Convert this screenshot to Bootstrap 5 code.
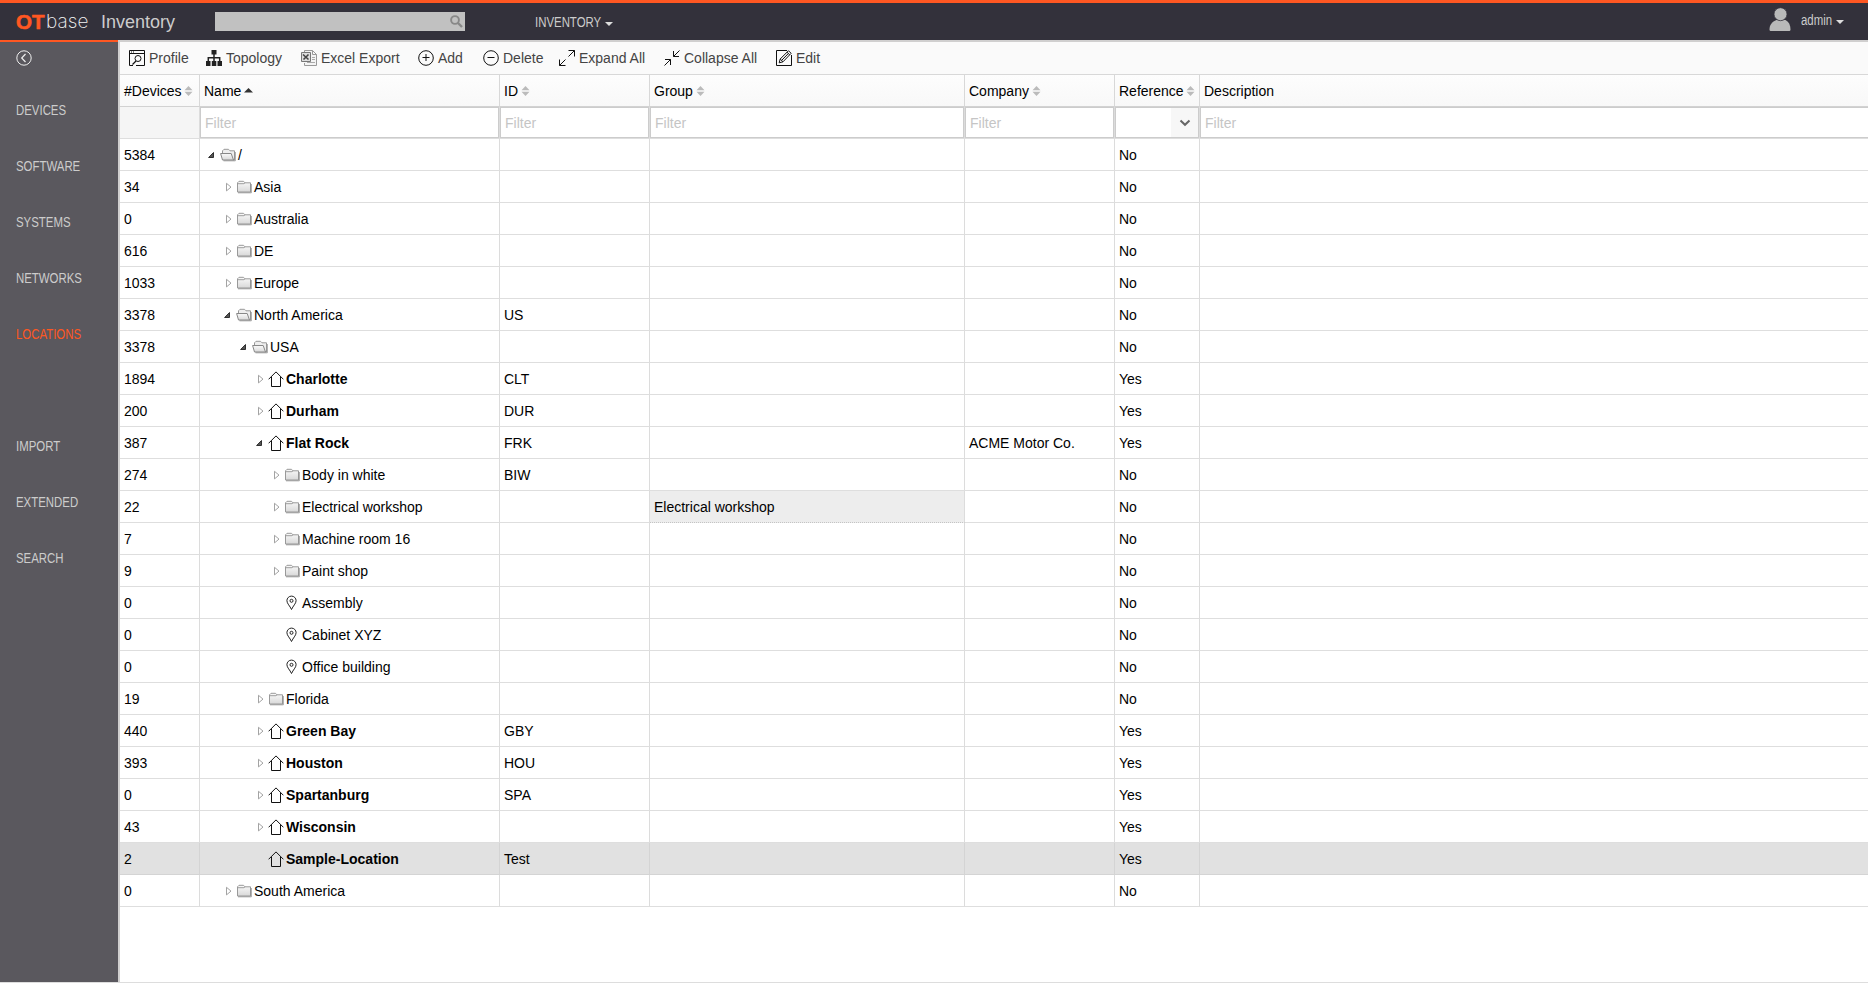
<!DOCTYPE html>
<html lang="en">
<head>
<meta charset="utf-8">
<title>OTbase Inventory</title>
<link rel="stylesheet" href="https://cdn.jsdelivr.net/npm/bootstrap@5.3.0/dist/css/bootstrap.min.css">
<style>
body{font-family:"Liberation Sans",Arial,sans-serif;font-size:14px;line-height:20px;color:#000;background:#fff}
.narrow span{display:inline-block;transform:scaleX(.815);transform-origin:left center}
.topbar{height:42px;background:#33313b;border-top:3px solid #ff5722;border-bottom:2px solid #d0cfcf}
.brandbox{width:215px;padding-left:16px;height:37px}
.brandbox .ot{font-weight:700;font-size:20.5px;color:#ff5722;width:30px;-webkit-text-stroke:.6px #ff5722}
.brandbox .base{font-family:Inter,sans-serif;font-weight:200;font-size:19px;color:#f4f4f4;width:55px;letter-spacing:.1px}
.brandbox .app{font-size:18px;color:#ccc}
.searchbox{width:250px;height:19px;background:#c1c1c1;margin-top:9px;padding-right:2px}
.menutxt{color:#ccc;font-size:14px}
.tri{border:4px solid transparent;border-top-color:#ddd;border-bottom:0;width:0;height:0}
.side{width:120px;background:#5a585e;border-right:2px solid #d0cfcf}
.side .accent{height:2px;margin-top:-2px;width:118px;background:#ff5722}
.side a{height:56px;padding-left:16px;color:#ccc;text-decoration:none}
.side a.active{color:#ff5722}
.side .upper{margin-bottom:56px}
.tools{height:33px;background:#fafafa;border-bottom:1px solid #d8d8d8;padding-left:9px;color:#444;grid-template-columns:77px 95px 117px 65px 76px 105px 112px 80px}
.tools .item{gap:4px;white-space:nowrap}
.grid{table-layout:fixed;border-collapse:separate;border-spacing:0;width:1748px}
.grid th,.grid td{height:32px;padding:0 0 0 4px;border-right:1px solid #dcdcdc;border-bottom:1px solid #dedede;font-weight:400;vertical-align:middle;white-space:nowrap;line-height:20px}
.grid th:last-child,.grid td:last-child{border-right:0}
.grid thead tr:first-child th{background:linear-gradient(#fdfdfd,#f8f8f8);border-color:#d2d2d2 #d8d8d8}
.grid thead tr:first-child svg{margin-left:-1px}
.grid .sorter{margin-top:-2px}
.grid .filters th{padding:0;background:#f5f5f5}
.grid .filters .form-control{height:31px;border:1px solid #ccc;border-radius:0;padding:0 4px;font-size:14px;color:#000;box-shadow:none}
.grid .filters .form-control::placeholder{color:#c5c5c5}
.grid .filters th:last-child .form-control{border-right:0}
.pick{height:31px;border:1px solid #ccc;background:#fff}
.pick span{width:27px;background:#f7f7f7}
.grid tr.selected td{background:#e1e1e1;border-color:#d4d4d4}
.grid td.hl{background:#ededed;border-bottom:1px dotted #c4c4c4}
.tree{height:20px}
.tree svg{flex:none}
.tree .ar{width:16px;height:16px}
.page{height:941px;border-bottom:1px solid #ddd}
</style>
</head>
<body class="overflow-hidden">
<svg width="0" height="0" class="position-absolute">
<defs>
<linearGradient id="gf" x1="0" y1="0" x2="0" y2="1"><stop offset="0" stop-color="#fafafa"/><stop offset="1" stop-color="#d8d8d8"/></linearGradient>
<symbol id="folder" viewBox="0 0 16 16"><path d="M1.500 13V3.800L3 2.300h4.500L9 3.800h5.500V13z" fill="url(#gf)" stroke="#999"/><path d="M2 4.700h6l1-.9M15.300 5v8.800H2" fill="none" stroke="#888" stroke-width=".8"/></symbol>
<symbol id="open" viewBox="0 0 16 16"><path d="M2.500 7V3.800L4 2.300h4.500L10 3.800h4.500V13H13" fill="#eee" stroke="#999"/><path d="M.6 6.500h10.600L13.500 13h-11z" fill="url(#gf)" stroke="#888"/><path d="M15.300 5v8.800H3.500" fill="none" stroke="#888" stroke-width=".8"/></symbol>
<symbol id="house" viewBox="0 0 16 16"><path d="M.6 8.300 8 .9l7.400 7.400M3.500 6v9.500h9V6" fill="none" stroke="#111" stroke-width="1"/></symbol>
<symbol id="pin" viewBox="0 0 16 16"><path d="M7.500 14.500C6 11 2.900 8.500 2.900 5.700a4.600 4.600 0 0 1 9.200 0C12.100 8.500 9 11 7.500 14.500z" fill="none" stroke="#222"/><circle cx="7.500" cy="5.800" r="1.500" fill="none" stroke="#222"/></symbol>
<symbol id="shut" viewBox="0 0 16 16"><path d="M6.500 4.300v7.600L11 8.100z" fill="#fff" stroke="#999" stroke-width=".9"/></symbol>
<symbol id="down" viewBox="0 0 16 16"><path d="M9.500 5.500v5H4.600z" fill="#555" stroke="#222" stroke-width=".9"/></symbol>
<symbol id="sort" viewBox="0 0 8 10"><path d="M0 4.300 4 0l4 4.300zM0 5.700h8L4 10z" fill="#bbb"/></symbol>
</defs>
</svg>

<header class="topbar d-flex">
  <div class="brandbox d-flex align-items-center"><span class="ot">OT</span><span class="base">base</span><span class="app">Inventory</span></div>
  <div class="searchbox d-flex justify-content-end align-items-center"><svg width="13" height="13" viewBox="0 0 13 13" fill="none" stroke="#888"><circle cx="5" cy="5" r="3.900" stroke-width="1.900"/><path d="m8 8 4 4" stroke-width="2.400"/></svg></div>
  <div class="narrow menutxt d-flex align-items-center" style="margin-left:70px"><span style="margin-right:-15px">INVENTORY</span><i class="tri ms-1 mt-1"></i></div>
  <div class="narrow menutxt d-flex align-items-center ms-auto" style="margin-right:24px"><svg style="margin-right:8px;margin-top:-3px" width="24" height="26" viewBox="0 0 24 26" fill="#b9b9b9"><path d="M7.500 13h9c3.500 2 5 5 5 9.500 0 1-.7 1.500-1.700 1.500H2.200C1.200 24 .5 23.500.5 22.500.5 18 3 14.500 7.500 13z"/><circle cx="11.500" cy="7.200" r="6.500" stroke="#33313b" stroke-width=".8"/></svg><span style="margin-right:-7px;margin-top:-3px">admin</span><i class="tri ms-1"></i></div>
</header>

<div class="page d-flex">
  <nav class="side narrow flex-shrink-0 d-flex flex-column">
    <div class="accent"></div>
    <div class="ps-3" style="height:40px"><svg class="d-block" style="margin-top:8px" width="16" height="16" viewBox="0 0 16 16" fill="none" stroke="#eee"><circle cx="8" cy="8" r="7.200"/><path d="M9.500 4 5.700 8l3.800 4" stroke-width="1.200"/></svg></div>
    <div class="upper">
      <a class="d-flex align-items-center" href="#"><span>DEVICES</span></a>
      <a class="d-flex align-items-center" href="#"><span>SOFTWARE</span></a>
      <a class="d-flex align-items-center" href="#"><span>SYSTEMS</span></a>
      <a class="d-flex align-items-center" href="#"><span>NETWORKS</span></a>
      <a class="d-flex align-items-center active" href="#"><span>LOCATIONS</span></a>
    </div>
    <a class="d-flex align-items-center" href="#"><span>IMPORT</span></a>
    <a class="d-flex align-items-center" href="#"><span>EXTENDED</span></a>
    <a class="d-flex align-items-center" href="#"><span>SEARCH</span></a>
  </nav>
  <main class="flex-grow-1">
    <div class="tools d-grid align-items-center">
      <div class="item d-flex align-items-center"><svg width="16" height="16" viewBox="0 0 16 16" fill="none" stroke="#111"><path d="M4 15.500H.5V.5h15v15H7M.5 3.500h15M2 2h1m1 0h1"/><circle cx="9" cy="8.500" r="3"/><path d="m7 11-3.500 3.500" stroke-width="1.200"/></svg>Profile</div>
      <div class="item d-flex align-items-center"><svg width="16" height="16" viewBox="0 0 16 16" fill="#222"><path d="M5.500 0h5v4.500h-5zM0 11h4.500v5H0zM5.800 11h4.500v5H5.800zM11.500 11H16v5h-4.500z"/><path d="M8 4v8M2.300 12V7.700h11.400V12" fill="none" stroke="#222" stroke-width="1.500"/></svg>Topology</div>
      <div class="item d-flex align-items-center"><svg width="16" height="16" viewBox="0 0 16 16" fill="none" stroke="#777"><path d="M3.500 3V.5h8l4 4v11h-12V13M11.500.5v4h4" fill="#f4f4f4" stroke="#999"/><path d="M11 7.500h3M11 9.500h3M6 12.500h8" stroke="#aaa"/><path d="M.5 2.500h9v9h-9z" fill="#ddd"/><path d="m2 4.500 5.500 5M7.500 4.500l-5 5" stroke="#444" stroke-width="1.600"/></svg>Excel Export</div>
      <div class="item d-flex align-items-center"><svg width="16" height="16" viewBox="0 0 16 16" fill="none" stroke="#111"><circle cx="8" cy="8" r="7.300"/><path d="M4.500 7.500h7M8 4v7"/></svg>Add</div>
      <div class="item d-flex align-items-center"><svg width="16" height="16" viewBox="0 0 16 16" fill="none" stroke="#111"><circle cx="8" cy="8" r="7.300"/><path d="M4.500 7.500h7"/></svg>Delete</div>
      <div class="item d-flex align-items-center"><svg width="16" height="16" viewBox="0 0 16 16" fill="none" stroke="#111"><path d="M9.500.5h6v6M15.500.5 9.500 6.500M.5 9.500v6h6M.5 15.500 6.500 9.500"/></svg>Expand All</div>
      <div class="item d-flex align-items-center"><svg width="16" height="16" viewBox="0 0 16 16" fill="none" stroke="#111"><path d="M9.500 1v5.500H15M9.500 6.500l6-6M1 9.500h5.500V15M6.500 9.500l-6 6"/></svg>Collapse All</div>
      <div class="item d-flex align-items-center"><svg width="16" height="16" viewBox="0 0 16 16" fill="none" stroke="#111"><path d="M11 .5H.5v15h15V5"/><path d="m3.200 12.800 1-3.800L12.500.7l2.600 2.600L7 11.800zM4.200 9 7 11.800M11 2.200l2.700 2.600M5.600 10.400l6.500-6.600"/></svg>Edit</div>
    </div>
    <table class="grid">
      <colgroup><col style="width:80px"><col style="width:300px"><col style="width:150px"><col style="width:315px"><col style="width:150px"><col style="width:85px"><col></colgroup>
      <thead>
        <tr>
          <th>#Devices <svg class="sorter" width="9" height="10"><use href="#sort"/></svg></th>
          <th>Name <svg width="9" height="5" viewBox="0 0 9 5" style="margin-bottom:2px"><path d="M0 4.500 4.500 0 9 4.500z" fill="#333"/></svg></th>
          <th>ID <svg class="sorter" width="9" height="10"><use href="#sort"/></svg></th>
          <th>Group <svg class="sorter" width="9" height="10"><use href="#sort"/></svg></th>
          <th>Company <svg class="sorter" width="9" height="10"><use href="#sort"/></svg></th>
          <th>Reference <svg class="sorter" width="9" height="10"><use href="#sort"/></svg></th>
          <th>Description</th>
        </tr>
        <tr class="filters">
          <th></th>
          <th><input class="form-control" placeholder="Filter"></th>
          <th><input class="form-control" placeholder="Filter"></th>
          <th><input class="form-control" placeholder="Filter"></th>
          <th><input class="form-control" placeholder="Filter"></th>
          <th><div class="pick d-flex justify-content-end"><span class="d-flex align-items-center justify-content-center"><svg width="12" height="8" viewBox="0 0 12 8" fill="none" stroke="#666" stroke-width="2"><path d="m1.500 1.500 4.500 4.300 4.500-4.300"/></svg></span></div></th>
          <th><input class="form-control" placeholder="Filter"></th>
        </tr>
      </thead>
      <tbody id="rows"></tbody>
    </table>
  </main>
</div>
<script src="https://cdn.jsdelivr.net/npm/bootstrap@5.3.0/dist/js/bootstrap.bundle.min.js"></script>
<script>
// devices, depth, arrow, icon, name, id, group, company, reference
const rows = [
  [5384,0,'down','open','/','','','','No'],
  [34,1,'shut','folder','Asia','','','','No'],
  [0,1,'shut','folder','Australia','','','','No'],
  [616,1,'shut','folder','DE','','','','No'],
  [1033,1,'shut','folder','Europe','','','','No'],
  [3378,1,'down','open','North America','US','','','No'],
  [3378,2,'down','open','USA','','','','No'],
  [1894,3,'shut','house','Charlotte','CLT','','','Yes'],
  [200,3,'shut','house','Durham','DUR','','','Yes'],
  [387,3,'down','house','Flat Rock','FRK','','ACME Motor Co.','Yes'],
  [274,4,'shut','folder','Body in white','BIW','','','No'],
  [22,4,'shut','folder','Electrical workshop','','Electrical workshop','','No'],
  [7,4,'shut','folder','Machine room 16','','','','No'],
  [9,4,'shut','folder','Paint shop','','','','No'],
  [0,4,'','pin','Assembly','','','','No'],
  [0,4,'','pin','Cabinet XYZ','','','','No'],
  [0,4,'','pin','Office building','','','','No'],
  [19,3,'shut','folder','Florida','','','','No'],
  [440,3,'shut','house','Green Bay','GBY','','','Yes'],
  [393,3,'shut','house','Houston','HOU','','','Yes'],
  [0,3,'shut','house','Spartanburg','SPA','','','Yes'],
  [43,3,'shut','house','Wisconsin','','','','Yes'],
  [2,3,'','house','Sample-Location','Test','','','Yes'],
  [0,1,'shut','folder','South America','','','','No']
];
document.getElementById('rows').innerHTML = rows.map(([n,d,a,i,t,id,g,c,r]) =>
  `<tr class="${t === 'Sample-Location' ? 'selected' : ''}"><td>${n}</td>
   <td><div class="tree d-flex align-items-center" style="padding-left:${d*16}px"><svg class="ar">${a ? `<use href="#${a}"/>` : ''}</svg><svg width="16" height="16" style="margin-right:2px"><use href="#${i}"/></svg><span class="${i === 'house' ? 'fw-bold' : ''}">${t}</span></div></td>
   <td>${id}</td><td class="${g ? 'hl' : ''}">${g}</td><td>${c}</td><td>${r}</td><td></td></tr>`).join('');
</script>
</body>
</html>
